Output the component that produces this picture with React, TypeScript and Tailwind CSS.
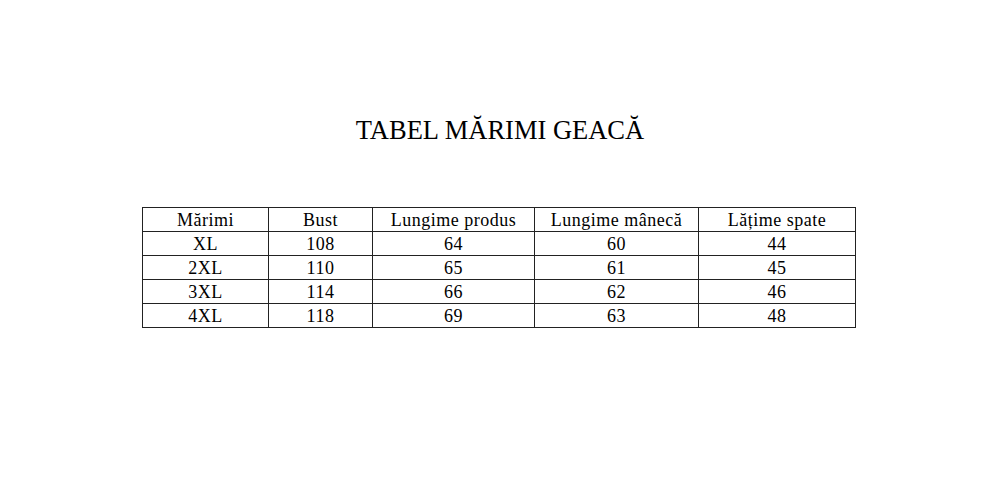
const rows = [
  ["XL", "108", "64", "60", "44"],
  ["2XL", "110", "65", "61", "45"],
  ["3XL", "114", "66", "62", "46"],
  ["4XL", "118", "69", "63", "48"],
];

const headers = ["Mărimi", "Bust", "Lungime produs", "Lungime mânecă", "Lățime spate"];
const widths = ["w-[126px]", "w-[104px]", "w-[162px]", "w-[164px]", "w-[157px]"];

export default function App() {
  return (
    <main className="w-[1000px] h-[498px] bg-white text-black font-['Liberation_Serif',serif] flex flex-col items-center">
      <h1 className="mt-[114px] text-[26.5px] leading-[32px] text-center">TABEL MĂRIMI GEACĂ</h1>
      <table className="mt-[61px] ml-[-2px] border-collapse table-fixed text-[18px] leading-[22px] tracking-[0.5px] text-center">
        <thead>
          <tr>
            {headers.map((h, i) => (
              <th key={h} className={`${widths[i]} h-[24px] p-0 pt-[1px] font-normal border border-[#222]`}>
                {h}
              </th>
            ))}
          </tr>
        </thead>
        <tbody>
          {rows.map((r) => (
            <tr key={r[0]}>
              {r.map((c, i) => (
                <td key={i} className="h-[24px] p-0 pt-[1px] border border-[#222]">
                  {c}
                </td>
              ))}
            </tr>
          ))}
        </tbody>
      </table>
    </main>
  );
}
